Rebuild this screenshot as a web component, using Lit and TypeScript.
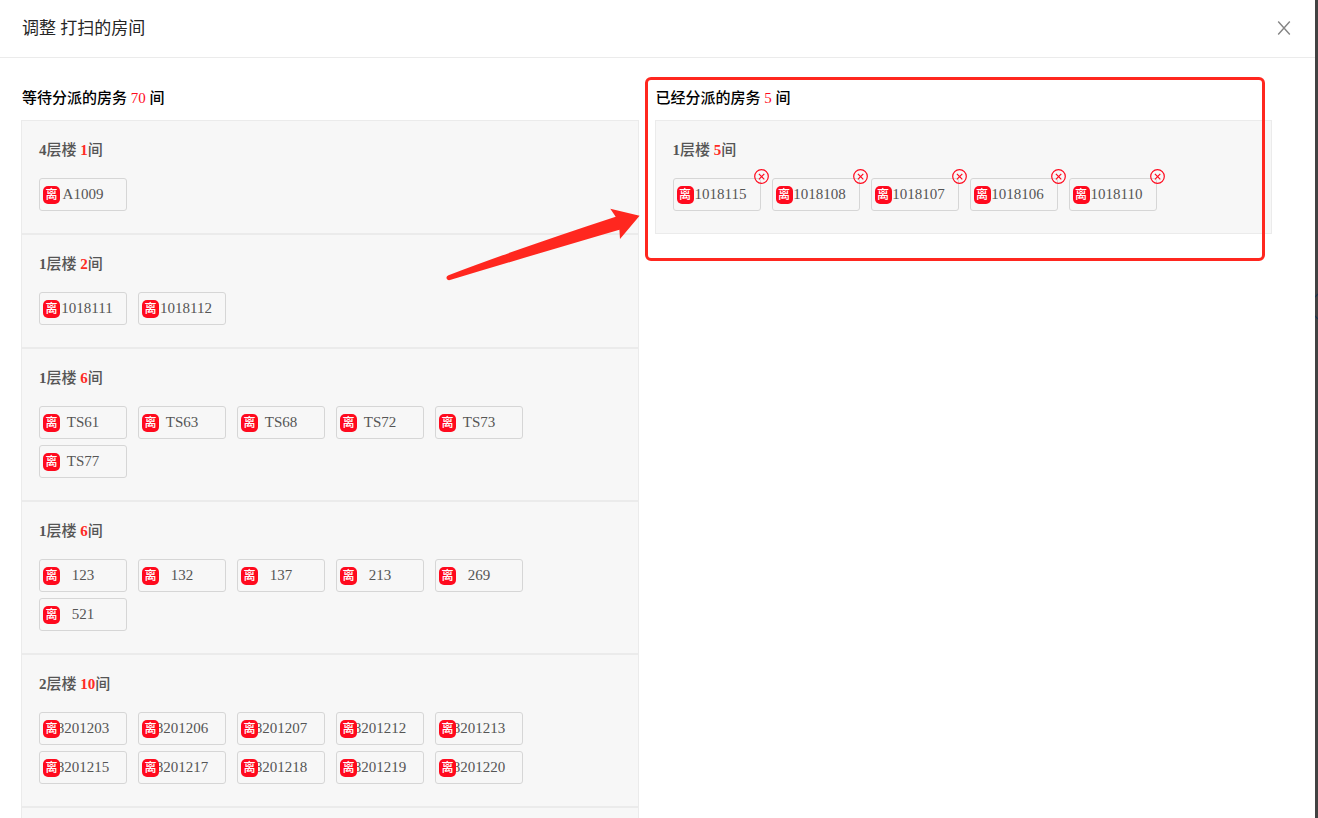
import { LitElement, html, css, nothing } from "lit";
import { customElement, property } from "lit/decorators.js";
import { classMap } from "lit/directives/class-map.js";

interface Floor {
  floor: string;
  rooms: string[];
}

const waiting: Floor[] = [
  { floor: "4", rooms: ["A1009"] },
  { floor: "1", rooms: ["1018111", "1018112"] },
  { floor: "1", rooms: ["TS61", "TS63", "TS68", "TS72", "TS73", "TS77"] },
  { floor: "1", rooms: ["123", "132", "137", "213", "269", "521"] },
  {
    floor: "2",
    rooms: [
      "8201203", "8201206", "8201207", "8201212", "8201213",
      "8201215", "8201217", "8201218", "8201219", "8201220",
    ],
  },
];

const assigned: Floor[] = [
  { floor: "1", rooms: ["1018115", "1018108", "1018107", "1018106", "1018110"] },
];

@customElement("room-chip")
class RoomChip extends LitElement {
  @property() room = "";
  @property({ type: Boolean }) removable = false;

  static styles = css`
    :host {
      display: block;
      position: relative;
      width: 88px;
      height: 33px;
    }
    .chip {
      display: block;
      position: relative;
      box-sizing: border-box;
      width: 100%;
      height: 100%;
      margin: 0;
      padding: 0;
      border: 1px solid #d6d6d6;
      border-radius: 3px;
      background: #f7f7f7;
      color: #555;
      font: inherit;
      line-height: 31px;
      text-align: center;
      cursor: pointer;
    }
    .wide {
      padding-left: 8px;
    }
    .badge {
      position: absolute;
      left: 3px;
      top: 7px;
      width: 17px;
      height: 18px;
      border-radius: 5px;
      background: #ff0a1e;
      color: #fff;
      font-size: 12px;
      font-weight: 500;
      line-height: 18px;
    }
    .remove {
      position: absolute;
      top: -9px;
      right: -8px;
      width: 15px;
      height: 15px;
      padding: 0;
      border: 0;
      background: none;
      cursor: pointer;
    }
    .remove svg {
      display: block;
    }
  `;

  render() {
    return html`
      <button class=${classMap({ chip: true, wide: this.room.startsWith("1018") })} type="button">
        <span class="badge">离</span>${this.room}
      </button>
      ${this.removable
        ? html`<button class="remove" type="button" aria-label="移除 ${this.room}">
            <svg width="15" height="15" viewBox="0 0 15 15" fill="none" stroke="#ff0a1e">
              <circle cx="7.5" cy="7.5" r="6.8" stroke-width="1.2" />
              <path d="M4.9 4.9 10.3 10.3M10.3 4.9 4.9 10.3" stroke-width="1.2" />
            </svg>
          </button>`
        : nothing}
    `;
  }
}

@customElement("floor-section")
class FloorSection extends LitElement {
  @property({ attribute: false }) data: Floor | null = null;
  @property({ type: Boolean }) removable = false;

  static styles = css`
    :host {
      display: block;
      border: 1px solid #ebebeb;
      background: #f7f7f7;
      padding: 18px 17px 22px;
    }
    .title {
      margin: 0 0 17px;
      color: #555;
      font-size: 15px;
      font-weight: 500;
      line-height: 22px;
    }
    .floor {
      font-weight: 700;
    }
    .count {
      color: #ff2a24;
      font-weight: 700;
    }
    .rooms {
      display: flex;
      flex-wrap: wrap;
      gap: 6px 11px;
      margin: 0;
      padding: 0;
      list-style: none;
    }
  `;

  render() {
    if (!this.data) return nothing;
    const { floor, rooms } = this.data;
    return html`
      <h3 class="title"><span class="floor">${floor}</span>层楼 <span class="count">${rooms.length}</span>间</h3>
      <ul class="rooms">
        ${rooms.map((r) => html`<li><room-chip .room=${r} .removable=${this.removable}></room-chip></li>`)}
      </ul>
    `;
  }
}

@customElement("app-root")
class AppRoot extends LitElement {
  static styles = css`
    :host {
      display: block;
      height: 100vh;
      overflow: hidden;
      position: relative;
      background: #424242;
      font-family: "Liberation Serif", "Noto Sans CJK SC", serif;
      font-size: 15px;
      color: #000;
    }
    .dialog {
      height: 100%;
      margin-right: 3px;
      background: #fff;
    }
    .header {
      display: flex;
      align-items: center;
      justify-content: space-between;
      box-sizing: border-box;
      height: 58px;
      padding: 0 22px;
      border-bottom: 1px solid #ebebeb;
    }
    .heading {
      margin: 0;
      color: #262626;
      font-size: 17px;
      font-weight: 400;
      line-height: 25px;
    }
    .close {
      width: 18px;
      height: 20px;
      padding: 2px 2px 4px;
      border: 0;
      background: none;
      cursor: pointer;
    }
    .close svg {
      display: block;
    }
    .body {
      display: grid;
      grid-template-columns: 1fr 1fr;
      align-items: start;
      gap: 16px;
      padding: 29px 43px 0 21px;
    }
    .column {
      position: relative;
    }
    .summary {
      margin: 0 0 11px;
      padding-left: 1px;
      font-size: 15px;
      font-weight: 500;
      line-height: 22px;
    }
    .total {
      color: #ff0a1e;
    }
    .frame {
      position: absolute;
      inset: -10px 7px -27px -10px;
      border: 3px solid #ff271f;
      border-radius: 6px;
      pointer-events: none;
    }
    .arrow {
      position: absolute;
      top: 117px;
      right: -1px;
      pointer-events: none;
    }
    .backdrop {
      position: absolute;
      top: 290px;
      right: 0;
    }
  `;

  render() {
    return html`
      <main class="dialog">
        <header class="header">
          <h1 class="heading">调整 打扫的房间</h1>
          <button class="close" type="button" aria-label="关闭">
            <svg width="14" height="14" viewBox="0 0 14 14" fill="none" stroke="#858585" stroke-width="1.4">
              <path d="M1.2.5 12.8 13.5M12.8.5 1.2 13.5" />
            </svg>
          </button>
        </header>
        <div class="body">
          <section class="column">
            <h2 class="summary">等待分派的房务 <span class="total">70</span> 间</h2>
            ${waiting.map((f) => html`<floor-section .data=${f}></floor-section>`)}
            <floor-section></floor-section>
            <svg class="arrow" width="196" height="78" viewBox="444 204 196 78" aria-hidden="true">
              <path
                fill="#ff271f"
                d="M448.5 275.2 Q520 248 615.7 216.7 L610.3 208.7 L639.6 215.7 L620 239 L619.4 229.7 Q550 250 450 280 Q447.5 280.6 446.6 278.4 Q446 276.2 448.5 275.2Z"
              />
            </svg>
          </section>
          <section class="column">
            <h2 class="summary">已经分派的房务 <span class="total">5</span> 间</h2>
            ${assigned.map((f) => html`<floor-section .data=${f} .removable=${true}></floor-section>`)}
            <div class="frame"></div>
          </section>
        </div>
      </main>
      <svg class="backdrop" width="3" height="34" viewBox="0 0 3 34" fill="none" stroke="#17344f" aria-hidden="true">
        <path d="M0 7 3 4M0 26 3 29" stroke-width="1.2" />
      </svg>
    `;
  }
}
